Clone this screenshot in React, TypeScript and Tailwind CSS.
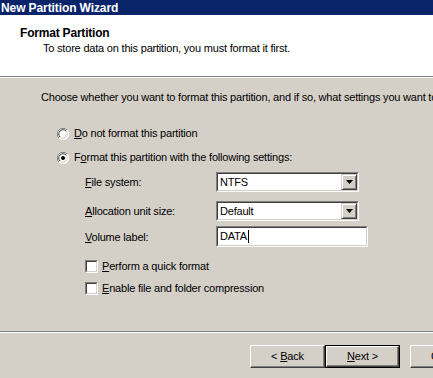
import React from 'react'

const FONT = 'font-["Tahoma","Liberation_Sans",Arial,sans-serif]'

// classic Win2k 3D borders
const SUNKEN = 'border border-t-[#808080] border-l-[#808080] border-b-white border-r-white'
const SUNKEN_INNER = 'border border-t-[#404040] border-l-[#404040] border-b-[#d4d0c8] border-r-[#d4d0c8]'

function Radio({ checked }: { checked?: boolean }) {
  return (
    <svg width="12" height="12" viewBox="0 0 12 12" className="shrink-0">
      <circle cx="6" cy="6" r="5.5" fill="#ffffff" />
      <path d="M10 2 A5.5 5.5 0 0 0 2 10" fill="none" stroke="#808080" strokeWidth="1" />
      <path d="M9 3 A4.2 4.2 0 0 0 3 9" fill="none" stroke="#404040" strokeWidth="1" />
      <path d="M2 10 A5.5 5.5 0 0 0 10 2" fill="none" stroke="#ffffff" strokeWidth="1" />
      <path d="M3 9 A4.2 4.2 0 0 0 9 3" fill="none" stroke="#d4d0c8" strokeWidth="1" />
      {checked && <circle cx="6" cy="6" r="2" fill="#000000" />}
    </svg>
  )
}

function Checkbox() {
  return (
    <span className={`box-border block h-[13px] w-[13px] shrink-0 ${SUNKEN}`}>
      <span className={`box-border block h-full w-full bg-white ${SUNKEN_INNER}`} />
    </span>
  )
}

function Combo({ value }: { value: string }) {
  return (
    <div className={`box-border flex h-[20px] w-[143px] ${SUNKEN}`}>
      <div className={`box-border flex h-full flex-1 items-center bg-white ${SUNKEN_INNER}`}>
        <span className="flex-1 pl-[2px] leading-none">{value}</span>
        <span className="box-border flex h-full w-[16px] items-center justify-center border border-t-[#d4d0c8] border-l-[#d4d0c8] border-b-[#404040] border-r-[#404040] bg-[#d4d0c8] shadow-[inset_1px_1px_0_#ffffff,inset_-1px_-1px_0_#808080]">
          <svg width="7" height="4" viewBox="0 0 7 4">
            <path d="M0 0h7L3.5 4z" fill="#000" />
          </svg>
        </span>
      </div>
    </div>
  )
}

function Button({ children, isDefault }: { children: React.ReactNode; isDefault?: boolean }) {
  return (
    <div
      className={`box-border flex h-[23px] w-[75px] shrink-0 items-center justify-center bg-[#d4d0c8] ${
        isDefault ? 'border border-black' : ''
      }`}
    >
      <div className="box-border flex h-full w-full items-center justify-center border border-t-white border-l-white border-b-[#404040] border-r-[#404040] shadow-[inset_-1px_-1px_0_#808080]">
        <span className="whitespace-pre">{children}</span>
      </div>
    </div>
  )
}

const U = ({ children }: { children: React.ReactNode }) => <span className="underline underline-offset-[1px]">{children}</span>

export default function App() {
  return (
    <div className={`relative h-[378px] w-[433px] overflow-hidden bg-[#d4d0c8] text-[11px] tracking-[-0.2px] text-black ${FONT}`}>
      {/* title bar */}
      <div className="flex h-[15px] items-center bg-[#0a246a] pl-[1px]">
        <span className="text-[12px] font-bold leading-none tracking-[-0.1px] text-white whitespace-nowrap">New Partition Wizard</span>
      </div>

      {/* header */}
      <div className="h-[61px] bg-white pl-[20px] pt-[12px]">
        <div className="text-[12px] font-bold leading-[13px]">Format Partition</div>
        <div className="mt-[2px] pl-[23px] leading-[13px] whitespace-nowrap">
          To store data on this partition, you must format it first.
        </div>
      </div>
      <div className="h-px bg-[#808080]" />
      <div className="h-px bg-white" />

      {/* body */}
      <div className="pl-[41px] pt-[13px]">
        <div className="leading-[13px] whitespace-nowrap">
          Choose whether you want to format this partition, and if so, what settings you want to use.
        </div>

        <div className="ml-[16px] mt-[23px] flex items-center gap-[5px] leading-[13px]">
          <Radio />
          <span>
            <U>D</U>o not format this partition
          </span>
        </div>
        <div className="ml-[16px] mt-[11px] flex items-center gap-[5px] leading-[13px]">
          <Radio checked />
          <span>
            F<U>o</U>rmat this partition with the following settings:
          </span>
        </div>

        <div className="ml-[44px] mt-[8px] grid grid-cols-[131px_auto] items-center gap-y-[9px]">
          <span>
            <U>F</U>ile system:
          </span>
          <Combo value="NTFS" />
          <span>
            <U>A</U>llocation unit size:
          </span>
          <Combo value="Default" />
          <span className="-mt-[3px]">
            <U>V</U>olume label:
          </span>
          <div className={`-mt-[4px] box-border h-[21px] w-[152px] ${SUNKEN}`}>
            <div className={`box-border flex h-full w-full items-center bg-white pl-[2px] ${SUNKEN_INNER}`}>
              <span className="leading-none">DATA</span>
              <span className="ml-[1px] h-[13px] w-px bg-black" />
            </div>
          </div>
        </div>

        <div className="ml-[44px] mt-[13px] flex items-center gap-[4px] leading-[13px]">
          <Checkbox />
          <span>
            <U>P</U>erform a quick format
          </span>
        </div>
        <div className="ml-[44px] mt-[9px] flex items-center gap-[4px] leading-[13px]">
          <Checkbox />
          <span>
            <U>E</U>nable file and folder compression
          </span>
        </div>
      </div>

      {/* footer */}
      <div className="absolute inset-x-0 top-[331px]">
        <div className="h-px bg-[#808080]" />
        <div className="h-px bg-white" />
        <div className="flex pl-[250px] pt-[12px]">
          <Button>
            &lt; <U>B</U>ack
          </Button>
          <Button isDefault>
            <U>N</U>ext &gt;
          </Button>
          <div className="ml-[10px]">
            <Button>Cancel</Button>
          </div>
        </div>
      </div>
    </div>
  )
}
